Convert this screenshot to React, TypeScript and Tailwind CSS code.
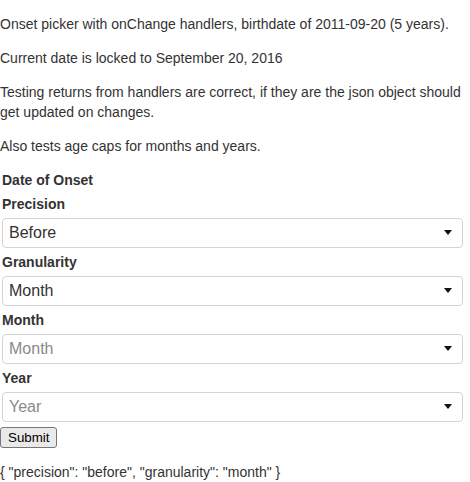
import { useState } from "react";

interface FieldProps {
  label: string;
  value: string;
  placeholder?: string;
  options: { value: string; label: string }[];
  onChange: (v: string) => void;
}

function SelectField({ label, value, placeholder, options, onChange }: FieldProps) {
  return (
    <>
      <label className="block font-bold leading-5 mb-[4px]">{label}</label>
      <div className="relative w-[461px] h-[30px] mb-[4px]">
        <select
          value={value}
          onChange={(e) => onChange(e.target.value)}
          className={`appearance-none w-full h-full bg-white border border-[#d4d4d4] rounded-[4px] pl-[6px] pr-6 text-[16px] outline-none ${
            value ? "text-[#333]" : "text-[#8a8a8a]"
          }`}
        >
          {placeholder && <option value="">{placeholder}</option>}
          {options.map((o) => (
            <option key={o.value} value={o.value}>
              {o.label}
            </option>
          ))}
        </select>
        <svg
          className="absolute left-[442px] top-[12px] pointer-events-none"
          width="8"
          height="5"
          viewBox="0 0 8 5"
        >
          <path d="M0 0H8L4 5Z" fill="#111" />
        </svg>
      </div>
    </>
  );
}

const months = [
  "January", "February", "March", "April", "May", "June",
  "July", "August", "September", "October", "November", "December",
];

export default function App() {
  const [precision, setPrecision] = useState("before");
  const [granularity, setGranularity] = useState("month");
  const [month, setMonth] = useState("");
  const [year, setYear] = useState("");

  const result: Record<string, string> = { precision, granularity };
  if (month) result.month = month;
  if (year) result.year = year;
  const json =
    "{ " +
    Object.entries(result)
      .map(([k, v]) => `"${k}": "${v}"`)
      .join(", ") +
    " }";

  return (
    <div className="pt-[14px] text-[14px] leading-5 text-[#333] font-['Liberation_Sans',Arial,sans-serif] flex flex-col">
      <p>Onset picker with onChange handlers, birthdate of 2011-09-20 (5 years).</p>
      <p className="mt-[14px]">Current date is locked to September 20, 2016</p>
      <p className="mt-[14px]">
        Testing returns from handlers are correct, if they are the json object should get updated on changes.
      </p>
      <p className="mt-[14px]">Also tests age caps for months and years.</p>

      <form className="mt-[14px]" onSubmit={(e) => e.preventDefault()}>
        <div className="px-[2px]">
          <label className="block font-bold leading-5 mb-[4px]">Date of Onset</label>
          <SelectField
            label="Precision"
            value={precision}
            onChange={setPrecision}
            options={[
              { value: "before", label: "Before" },
              { value: "exact", label: "Exact" },
              { value: "after", label: "After" },
            ]}
          />
          <SelectField
            label="Granularity"
            value={granularity}
            onChange={setGranularity}
            options={[
              { value: "day", label: "Day" },
              { value: "month", label: "Month" },
              { value: "year", label: "Year" },
            ]}
          />
          <SelectField
            label="Month"
            value={month}
            placeholder="Month"
            onChange={setMonth}
            options={months.map((m, i) => ({ value: String(i + 1), label: m }))}
          />
          <SelectField
            label="Year"
            value={year}
            placeholder="Year"
            onChange={setYear}
            options={["2016", "2015", "2014", "2013", "2012", "2011"].map((y) => ({ value: y, label: y }))}
          />
        </div>
        <button
          type="submit"
          className="mt-[1px] h-[21px] px-[7px] text-[13.33px] leading-4 text-black bg-[#e9e9e9] border border-[#767676] rounded-[3px]"
        >
          Submit
        </button>
      </form>

      <p className="mt-[14px]">{json}</p>
    </div>
  );
}
